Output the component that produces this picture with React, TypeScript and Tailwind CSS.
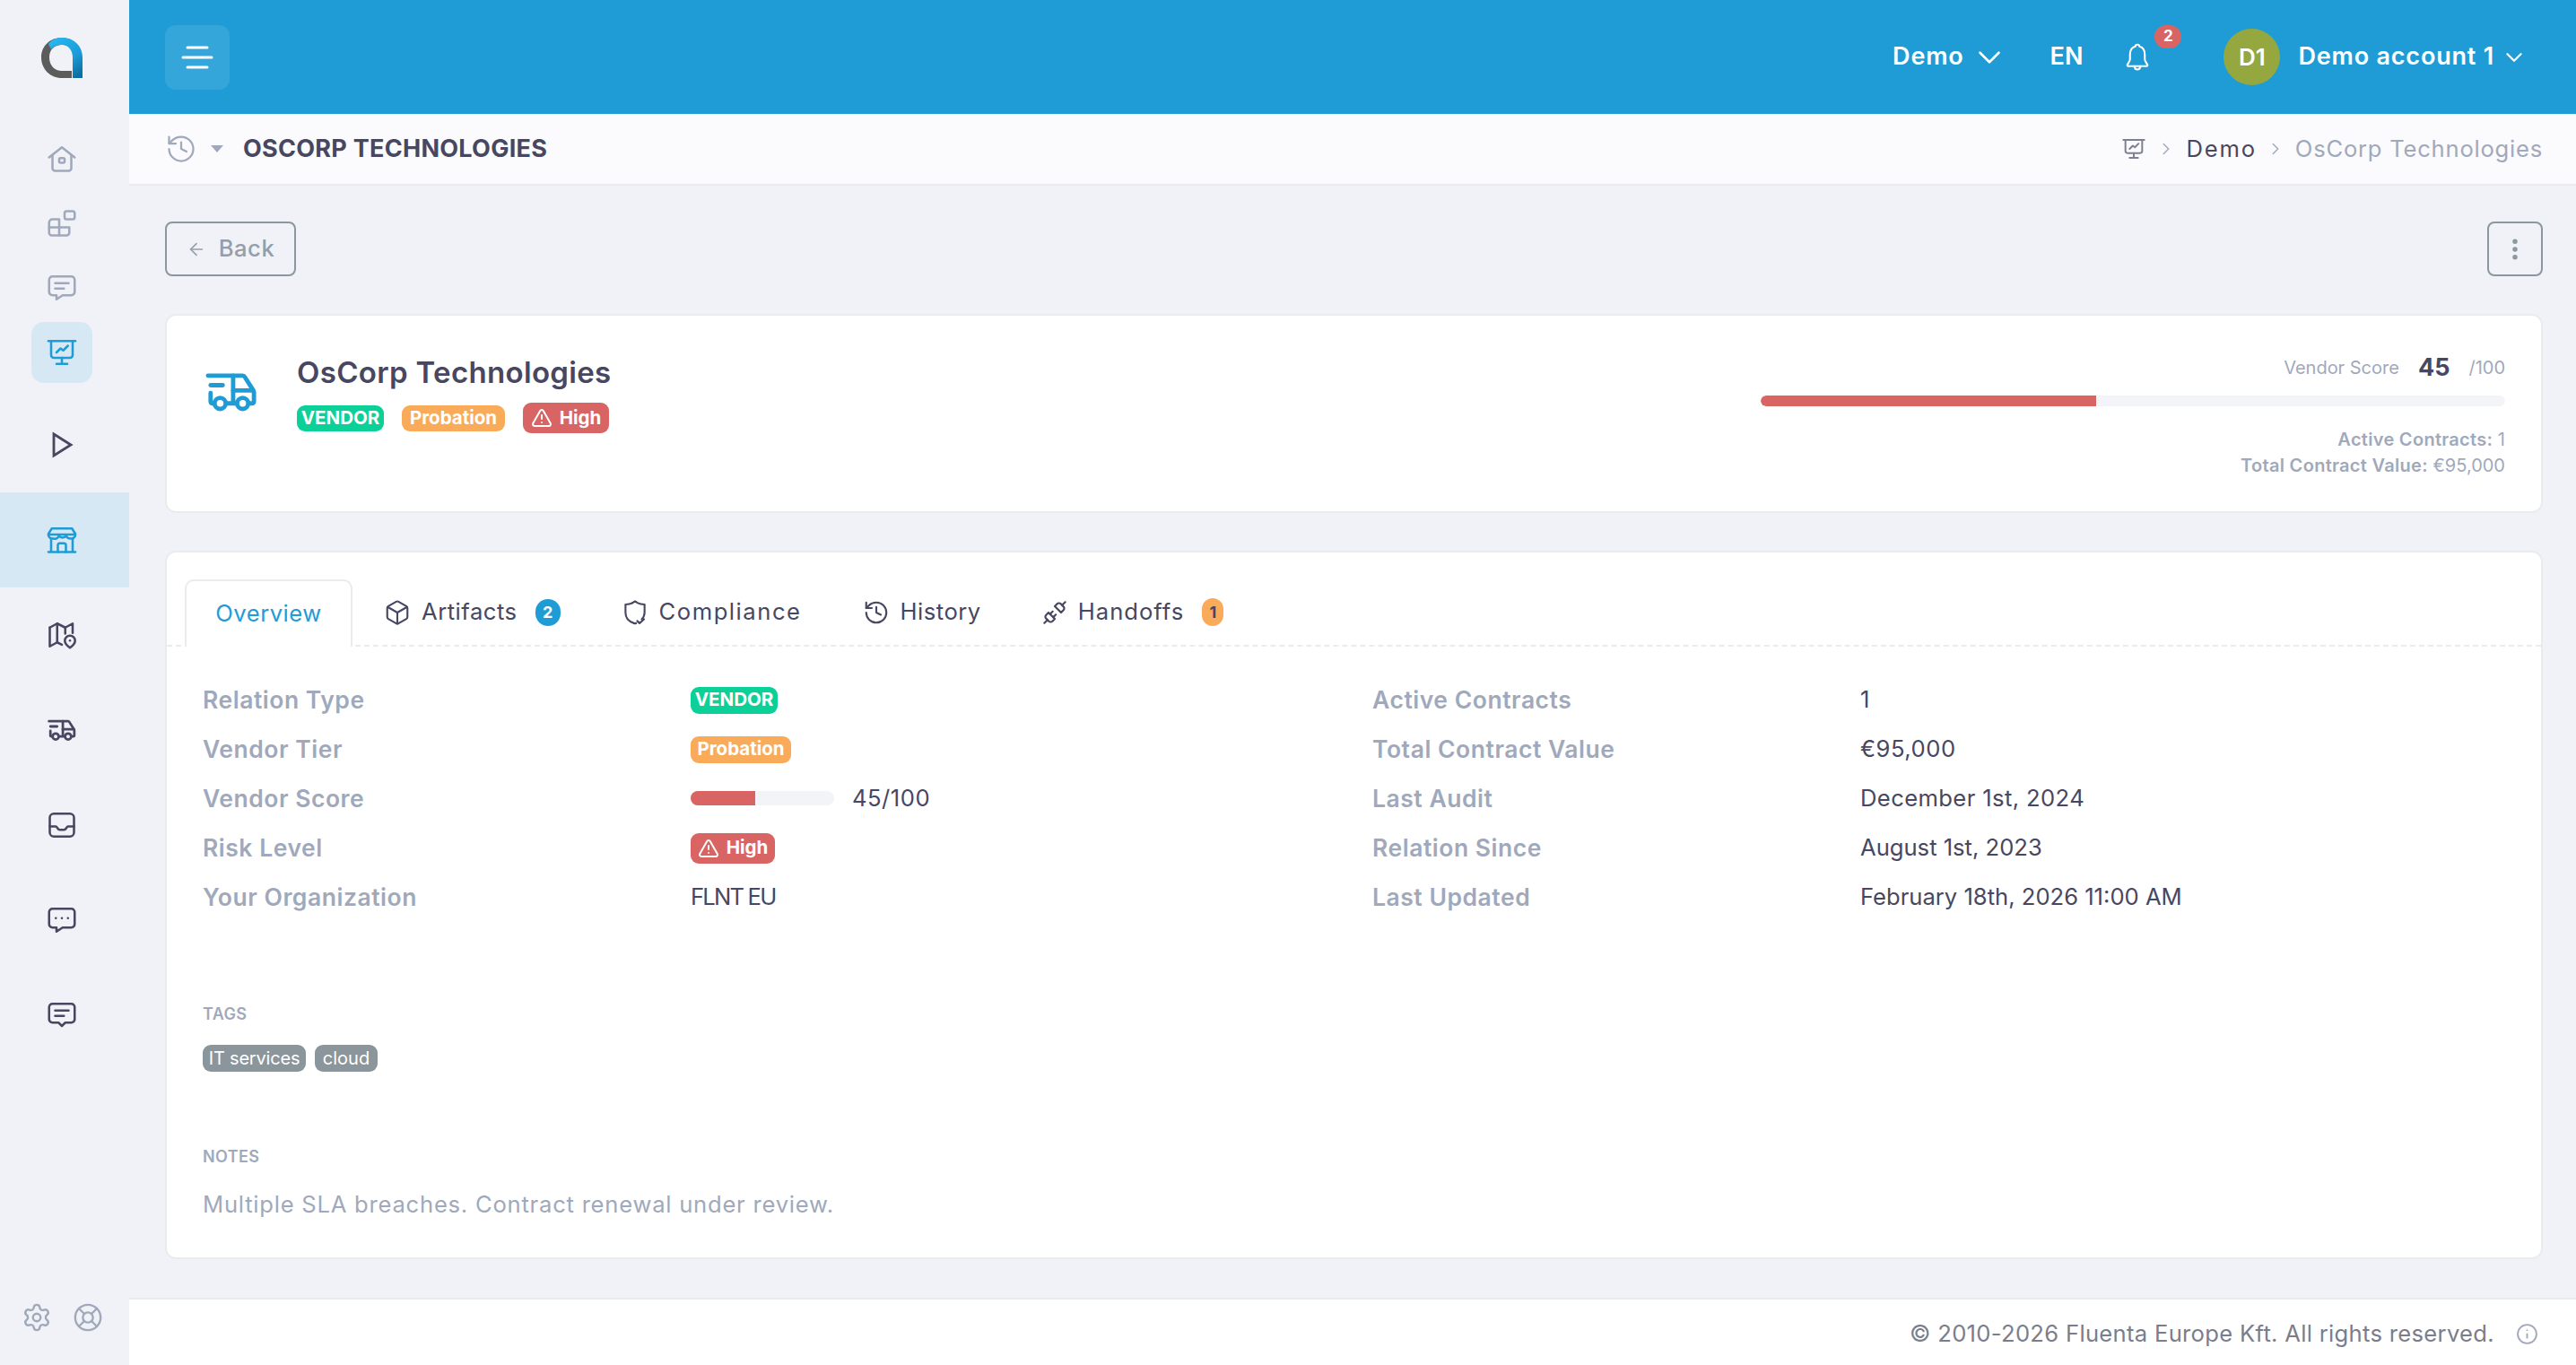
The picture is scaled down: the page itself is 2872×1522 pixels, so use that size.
import { ArrowLeft, Box, ChevronDown, ChevronRight, History, Info, LifeBuoy, MoreVertical, Settings, TriangleAlert, Unplug } from "lucide-react";
import type { ReactNode } from "react";

const LABEL = "text-[26.5px] font-semibold tracking-[0.02em] text-[#a0a9bb]";

function Glyph({ size = 36, stroke = 1.7, children }: { size?: number; stroke?: number; children: ReactNode }) {
  return (
    <svg width={size} height={size} viewBox="0 0 24 24" fill="none" stroke="currentColor" strokeWidth={stroke} strokeLinecap="round" strokeLinejoin="round">
      {children}
    </svg>
  );
}

function Logo() {
  return (
    <svg width="46" height="46" viewBox="0 0 46 46">
      <defs>
        <linearGradient id="logoBlue" x1="0.2" y1="0" x2="0.8" y2="1">
          <stop offset="0" stopColor="#25b7f2" />
          <stop offset="0.6" stopColor="#1b9ad6" />
          <stop offset="1" stopColor="#0b6ea0" />
        </linearGradient>
      </defs>
      <path d="M23 1C10 1 0 10 0 23c0 13 10 23 23 23h11v-8H23c-8 0-14-6-14-15S15 9 23 9c6 0 10 2 12 6l7-4C38 5 31 1 23 1z" fill="#5c5c5c" />
      <path d="M8 8C12 3 17 1 23 1c13 0 23 9 23 22v23h-11v-23c0-8-5-14-12-14-6 0-10 2-12 5z" fill="url(#logoBlue)" />
    </svg>
  );
}

function HomeIcon() {
  return (
    <Glyph>
      <path d="M2.5 11 12 3.5l9.5 7.5" />
      <path d="M5 9.5V19a2 2 0 0 0 2 2h10a2 2 0 0 0 2-2V9.5" />
      <rect x="10" y="11.5" width="4" height="3.5" rx="1" />
    </Glyph>
  );
}

function AppsIcon() {
  return (
    <Glyph>
      <path d="M10 9H5a2.5 2.5 0 0 0-2.5 2.5V19A2 2 0 0 0 4.5 21h11a2 2 0 0 0 2-2v-4H10V9z" />
      <path d="M2.5 15H10v6" />
      <rect x="14" y="3" width="7.5" height="6" rx="1.5" />
    </Glyph>
  );
}

function ChatIcon({ variant }: { variant: "lines" | "dots" | "center" }) {
  return (
    <Glyph>
      {variant === "center" ? (
        <path d="M5 3.5h14A2.5 2.5 0 0 1 21.5 6v9a2.5 2.5 0 0 1-2.5 2.5h-4.5L12 20l-2.5-2.5H5A2.5 2.5 0 0 1 2.5 15V6A2.5 2.5 0 0 1 5 3.5z" />
      ) : (
        <path d="M5 3.5h14A2.5 2.5 0 0 1 21.5 6v9a2.5 2.5 0 0 1-2.5 2.5h-6.5L8 20.5v-3H5A2.5 2.5 0 0 1 2.5 15V6A2.5 2.5 0 0 1 5 3.5z" />
      )}
      {variant === "dots" ? (
        <>
          <path d="M7.5 10.5h.01" />
          <path d="M12 10.5h.01" />
          <path d="M16.5 10.5h.01" />
        </>
      ) : (
        <>
          <path d="M7 8.5h10" />
          <path d="M7 12.5h6.5" />
        </>
      )}
    </Glyph>
  );
}

function BoardIcon({ size = 36 }: { size?: number }) {
  return (
    <Glyph size={size}>
      <path d="M2 3.5h20" />
      <path d="M4 3.5V14a2 2 0 0 0 2 2h12a2 2 0 0 0 2-2V3.5" />
      <path d="m8 12 3-3 2 1.5L16.5 7" />
      <path d="M12 16v4" />
      <path d="M8 20.5h8" />
    </Glyph>
  );
}

function StoreIcon() {
  return (
    <Glyph>
      <path d="M4.5 3.5h15l2.5 4v1a3 3 0 0 1-3.5 2.5 3.4 3.4 0 0 1-3.3-2 3.5 3.5 0 0 1-5.4 0A3.4 3.4 0 0 1 5.5 11 3 3 0 0 1 2 8.5v-1l2.5-4z" />
      <path d="M2.5 8h19" />
      <path d="M4 11v9.5" />
      <path d="M20 11v9.5" />
      <path d="M2 21h20" />
      <path d="M9 21v-5a1.5 1.5 0 0 1 1.5-1.5h3A1.5 1.5 0 0 1 15 16v5" />
    </Glyph>
  );
}

function MapIcon() {
  return (
    <Glyph>
      <path d="M3 6.5 8.5 3.5l6 3 5.5-3v7" />
      <path d="M3 6.5V20.5l5.5-3 3.5 1.8" />
      <path d="M8.5 3.5v14" />
      <path d="M14.5 6.5v4.5" />
      <path d="M18 12.5a3.8 3.8 0 0 1 3.8 3.8c0 2.4-3.8 5.2-3.8 5.2s-3.8-2.8-3.8-5.2a3.8 3.8 0 0 1 3.8-3.8z" />
      <path d="M18 16.2h.01" />
    </Glyph>
  );
}

function TruckIcon({ width, stroke }: { width: number; stroke: number }) {
  return (
    <svg width={width} viewBox="0 0 30 23" fill="none" stroke="currentColor" strokeWidth={stroke} strokeLinecap="round" strokeLinejoin="round">
      <path d="M1.5 2h14.5v15.5" />
      <path d="M16 2h5.5c.5 0 1 .3 1.2.7l4.8 7.6c.2.4.5.9.5 1.4V17a1 1 0 0 1-1 1h-1" />
      <path d="M16 10.5h11.5" />
      <path d="M3 7.5h7" />
      <path d="M3 12v5a1 1 0 0 0 1 1h1" />
      <path d="M12.5 18h5" />
      <circle cx="8.5" cy="18" r="3.2" />
      <circle cx="21.5" cy="18" r="3.2" />
    </svg>
  );
}

function InboxIcon() {
  return (
    <Glyph>
      <rect x="3" y="3.5" width="18" height="17" rx="3" />
      <path d="M3 13h4.5c1 0 1.2 2.5 3 2.5h3c1.8 0 2-2.5 3-2.5H21" />
    </Glyph>
  );
}

function ShieldCheckIcon() {
  return (
    <Glyph size={30}>
      <path d="M9.5 3.5 12 2l2.5 1.5c1.5.8 3.5 1.2 6 1.3v7.2c0 2.5-1 4.5-2.5 6" />
      <path d="M13 21.5c-.6.2-1.4.2-2 0-4.5-1.5-7.500-5-7.500-9.500V4.800c2.500-.1 4.500-.5 6-1.300" />
      <path d="m14 19.5 2 2 4-3.5" />
    </Glyph>
  );
}

function BellIcon() {
  return (
    <Glyph size={44} stroke={1.4}>
      <path d="M12 2.5c-.9 0-1.5.6-1.5 1.4C7.800 4.600 6.500 7.100 6.500 10v3.500c0 1.200-1.500 3-2 4 0 .6.400 1 1 1h13c.6 0 1-.4 1-1-.5-1-2-2.800-2-4V10c0-2.900-1.300-5.400-4-6.100 0-.8-.6-1.400-1.500-1.400z" />
      <path d="M10 18.500v.5a2 2 0 0 0 4 0v-.5" />
    </Glyph>
  );
}

function VendorBadge({ small = false }: { small?: boolean }) {
  return (
    <span className={`inline-flex items-center justify-center rounded-[9px] bg-[#0bd097] text-[20.5px] font-bold text-white ${small ? "h-[30px] w-[97px]" : "h-[29px] w-[97px]"}`}>
      VENDOR
    </span>
  );
}

function TierBadge({ small = false }: { small?: boolean }) {
  return (
    <span className={`inline-flex items-center justify-center rounded-[9px] bg-[#f9ab5a] text-[20.5px] font-bold text-white ${small ? "h-[30px] w-[112px]" : "h-[29px] w-[115px]"}`}>
      Probation
    </span>
  );
}

function RiskBadge({ small = false }: { small?: boolean }) {
  return (
    <span className={`inline-flex h-[34px] items-center justify-center gap-[8px] rounded-[9px] bg-[#d96464] text-[20.5px] font-bold text-white ${small ? "w-[94px]" : "w-[96px]"}`}>
      <TriangleAlert size={24} strokeWidth={2} />
      High
    </span>
  );
}

function Tab({ icon, label, badge, className = "", labelClass = "tracking-[0.02em]" }: { icon: ReactNode; label: string; badge?: ReactNode; className?: string; labelClass?: string }) {
  return (
    <div className={`flex h-[73px] items-center text-[#474761] ${className}`}>
      {icon}
      <span className={`ml-[12px] ${labelClass}`}>{label}</span>
      {badge}
    </div>
  );
}

function DetailRow({ left, value, right, text }: { left: string; value: ReactNode; right: string; text: ReactNode }) {
  return (
    <>
      <span className={LABEL}>{left}</span>
      {value}
      <span className={LABEL}>{right}</span>
      {text}
    </>
  );
}

export default function App() {
  return (
    <div className="flex h-screen w-full overflow-hidden bg-[#f0f2f7] font-['Inter',sans-serif] text-[25.6px] text-[#474761]">
      {/* SIDEBAR */}
      <aside className="flex w-[144px] shrink-0 flex-col bg-[#f0f2f7]">
        <div className="flex h-[128px] items-start justify-center pr-[6px] pt-[41px]">
          <Logo />
        </div>
        <div className="flex flex-col items-center gap-[4px] pr-[6px] pt-[15px] text-[#a0a9bb]">
          <div className="flex h-[68px] w-[68px] items-center justify-center"><HomeIcon /></div>
          <div className="flex h-[68px] w-[68px] items-center justify-center"><AppsIcon /></div>
          <div className="flex h-[68px] w-[68px] items-center justify-center"><ChatIcon variant="lines" /></div>
          <div className="flex h-[68px] w-[68px] items-center justify-center rounded-[14px] bg-[#d6e8f3] text-[#1f9cd6]"><BoardIcon /></div>
        </div>
        <div className="mt-[16px] flex flex-col text-[#474761]">
          <div className="flex h-[106px] items-center justify-center pr-[4px]">
            <svg width="24" height="30" viewBox="0 0 24 30" fill="none" stroke="currentColor" strokeWidth="2.8"><path d="M2 3 21 15 2 27z" /></svg>
          </div>
          <div className="flex h-[106px] items-center justify-center bg-[#d6e8f3] pr-[6px] text-[#1f9cd6]"><StoreIcon /></div>
          <div className="flex h-[106px] items-center justify-center pr-[6px]"><MapIcon /></div>
          <div className="flex h-[106px] items-center justify-center pr-[6px]"><TruckIcon width={32} stroke={2.6} /></div>
          <div className="flex h-[106px] items-center justify-center pr-[6px]"><InboxIcon /></div>
          <div className="flex h-[106px] items-center justify-center pr-[6px]"><ChatIcon variant="dots" /></div>
          <div className="flex h-[106px] items-center justify-center pr-[6px]"><ChatIcon variant="center" /></div>
        </div>
        <div className="mt-auto flex h-[106px] items-start justify-center gap-[23px] pr-[6px] pt-[36px] text-[#a0a9bb]">
          <Settings size={34} strokeWidth={1.7} />
          <LifeBuoy size={34} strokeWidth={1.7} />
        </div>
      </aside>

      <div className="flex min-w-0 flex-1 flex-col">
        {/* TOP BAR */}
        <header className="flex h-[127px] shrink-0 items-center bg-[#1f9cd6] pl-[40px] pr-[54px] text-white">
          <button className="flex h-[72px] w-[72px] items-center justify-center rounded-[12px] bg-white/10">
            <svg width="36" height="28" viewBox="0 0 36 28" fill="none" stroke="white" strokeWidth="3" strokeLinecap="round">
              <path d="M7 3h22" />
              <path d="M2 14h32" />
              <path d="M7 25h22" />
            </svg>
          </button>
          <div className="ml-auto flex items-center text-[27px] font-semibold">
            <span className="tracking-[0.03em]">Demo</span>
            <span className="ml-[7px]"><ChevronDown size={42} strokeWidth={1.5} /></span>
            <span className="ml-[47px]">EN</span>
            <div className="relative ml-[43px] flex h-[36px] w-[36px] items-center justify-center">
              <BellIcon />
              <span className="absolute left-[37px] -top-[18px] flex h-[26px] w-[30px] items-center justify-center rounded-full bg-[#d96464] text-[17px] font-bold">2</span>
            </div>
            <div className="ml-[78px] flex h-[63px] w-[63px] items-center justify-center rounded-full bg-[#95a83f] text-[26px]">D1</div>
            <span className="ml-[20px] tracking-[0.03em]">Demo account 1</span>
            <span className="ml-[7px]"><ChevronDown size={30} strokeWidth={1.8} /></span>
          </div>
        </header>

        {/* SUBHEADER */}
        <div className="flex h-[80px] shrink-0 items-center border-b-2 border-[#e9ebef] bg-[#fbfbfd] pl-[40px] pr-[37px]">
          <span className="text-[#a0a9bb]"><History size={36} strokeWidth={1.5} /></span>
          <svg width="16" height="10" viewBox="0 0 16 10" className="ml-[14px]"><path d="M1 1h14L8 9z" fill="#a0a9bb" /></svg>
          <h1 className="ml-[21px] text-[27px] font-bold tracking-[0.01em]">OSCORP TECHNOLOGIES</h1>
          <div className="ml-auto flex items-center">
            <span className="text-[#7c8090]"><BoardIcon size={28} /></span>
            <span className="ml-[11px] text-[#a0a9bb]"><ChevronRight size={22} strokeWidth={1.6} /></span>
            <span className="ml-[12px] tracking-[0.07em]">Demo</span>
            <span className="ml-[10px] text-[#a0a9bb]"><ChevronRight size={22} strokeWidth={1.6} /></span>
            <span className="ml-[11px] tracking-[0.03em] text-[#a0a9bb]">OsCorp Technologies</span>
          </div>
        </div>

        {/* CONTENT */}
        <main className="flex min-h-0 flex-1 flex-col gap-[42px] pl-[40px] pr-[37px] pt-[40px]">
          <div className="flex justify-between">
            <button className="flex h-[61px] w-[146px] items-center justify-center gap-[14px] rounded-[8px] border-2 border-[#8a979f] font-medium text-[#959ea8]">
              <ArrowLeft size={22} strokeWidth={1.8} />
              <span className="tracking-[0.02em]">Back</span>
            </button>
            <button className="flex h-[61px] w-[62px] items-center justify-center rounded-[8px] border-2 border-[#8a979f] text-[#8a979f]">
              <MoreVertical size={30} strokeWidth={2.4} />
            </button>
          </div>

          <section className="flex h-[222px] items-start justify-between rounded-[12px] border-2 border-[#e9ebef] bg-white pl-[43px] pr-[40px]">
            <div className="flex items-start gap-[44px] pt-[43px]">
              <div className="mt-[20px] text-[#1f9cd6]"><TruckIcon width={58} stroke={2.5} /></div>
              <div>
                <h2 className="text-[33px] font-semibold leading-[40px] tracking-[0.01em]">OsCorp Technologies</h2>
                <div className="mt-[14px] flex h-[34px] items-center gap-[20px]">
                  <VendorBadge />
                  <TierBadge />
                  <RiskBadge />
                </div>
              </div>
            </div>
            <div className="w-[830px] pt-[41px] text-right">
              <div className="flex h-[34px] items-center justify-end text-[#a0a9bb]">
                <span className="text-[20px]">Vendor Score</span>
                <span className="ml-[21px] text-[27px] font-bold text-[#474761]">45</span>
                <span className="ml-[21px] text-[20px]">/100</span>
              </div>
              <div className="mt-[14px] h-[12px] w-full overflow-hidden rounded-full bg-[#f3f4f8]">
                <div className="h-full rounded-l-full bg-[#d96464]" style={{ width: "45%" }} />
              </div>
              <div className="mt-[23px] text-[20px] leading-[29px] text-[#a0a9bb]">
                <div><span className="font-semibold tracking-[0.015em]">Active Contracts:</span> 1</div>
                <div><span className="font-semibold tracking-[0.015em]">Total Contract Value:</span> €95,000</div>
              </div>
            </div>
          </section>

          <section className="h-[790px] rounded-[12px] border-2 border-[#e9ebef] bg-white">
            <div className="flex border-b-2 border-dashed border-[#e9ebef] pl-[20px] pt-[30px]">
              <div className="-mb-[2px] flex h-[75px] w-[187px] items-center justify-center rounded-t-[10px] border-2 border-b-0 border-[#e9ebef] bg-white text-[#1f9cd6]">
                <span className="tracking-[0.02em]">Overview</span>
              </div>
              <Tab
                className="pl-[35px] pr-[35px]"
                icon={<Box size={30} strokeWidth={1.7} />}
                label="Artifacts"
                badge={<span className="ml-[20px] flex h-[30px] w-[28px] items-center justify-center rounded-full bg-[#1f9cd6] text-[18px] font-bold text-white">2</span>}
              />
              <Tab className="pl-[33px] pr-[35px]" icon={<ShieldCheckIcon />} label="Compliance" labelClass="tracking-[0.06em]" />
              <Tab className="pl-[33px] pr-[33px]" icon={<History size={30} strokeWidth={1.7} />} label="History" />
              <Tab
                className="pl-[35px] pr-[35px]"
                icon={<Unplug size={28} strokeWidth={1.9} />}
                label="Handoffs"
                labelClass="tracking-[0.04em]"
                badge={<span className="ml-[20px] flex h-[31px] w-[24px] items-center justify-center rounded-full bg-[#f9ab5a] text-[18px] font-bold text-[#474761]">1</span>}
              />
            </div>

            <div className="pl-[40px] pt-[32px]">
              <div className="grid auto-rows-[55px] grid-cols-[544px_760px_544px_1fr] items-center">
                <DetailRow left="Relation Type" value={<div className="flex"><VendorBadge small /></div>} right="Active Contracts" text={<span>1</span>} />
                <DetailRow left="Vendor Tier" value={<div className="flex"><TierBadge small /></div>} right="Total Contract Value" text={<span className="tracking-[0.02em]">€95,000</span>} />
                <DetailRow
                  left="Vendor Score"
                  value={
                    <div className="flex items-center">
                      <div className="h-[16px] w-[160px] overflow-hidden rounded-full bg-[#f3f4f8]">
                        <div className="h-full bg-[#d96464]" style={{ width: "45%" }} />
                      </div>
                      <span className="ml-[20px] tracking-[0.02em]">45/100</span>
                    </div>
                  }
                  right="Last Audit"
                  text={<span className="tracking-[0.015em]">December 1st, 2024</span>}
                />
                <DetailRow left="Risk Level" value={<div className="flex"><RiskBadge small /></div>} right="Relation Since" text={<span>August 1st, 2023</span>} />
                <DetailRow left="Your Organization" value={<span className="tracking-[-0.07em]">FLNT EU</span>} right="Last Updated" text={<span>February 18th, 2026 11:00 AM</span>} />
              </div>

              <div className="mt-[91px] text-[18px] font-semibold leading-[24px] tracking-[0.02em] text-[#a0a9bb]">TAGS</div>
              <div className="mt-[22px] flex gap-[10px]">
                <span className="flex h-[30px] w-[115px] items-center justify-center rounded-[9px] bg-[#8a969c] text-[20px] tracking-[-0.01em] text-white">IT services</span>
                <span className="flex h-[30px] w-[70px] items-center justify-center rounded-[9px] bg-[#8a969c] text-[20px] text-white">cloud</span>
              </div>

              <div className="mt-[83px] text-[18px] font-semibold leading-[24px] tracking-[0.02em] text-[#a0a9bb]">NOTES</div>
              <p className="mt-[21px] leading-[40px] tracking-[0.03em] text-[#a0a9bb]">Multiple SLA breaches. Contract renewal under review.</p>
            </div>
          </section>
        </main>

        {/* FOOTER */}
        <footer className="flex h-[75px] shrink-0 items-center justify-end border-t-2 border-[#e9ebef] bg-white pr-[42px] pt-[3px] text-[#7c7d8a]">
          <span className="tracking-[0.012em]">© 2010-2026 Fluenta Europe Kft. All rights reserved.</span>
          <span className="ml-[24px] text-[#a0a9bb]"><Info size={25} strokeWidth={1.8} /></span>
        </footer>
      </div>
    </div>
  );
}
